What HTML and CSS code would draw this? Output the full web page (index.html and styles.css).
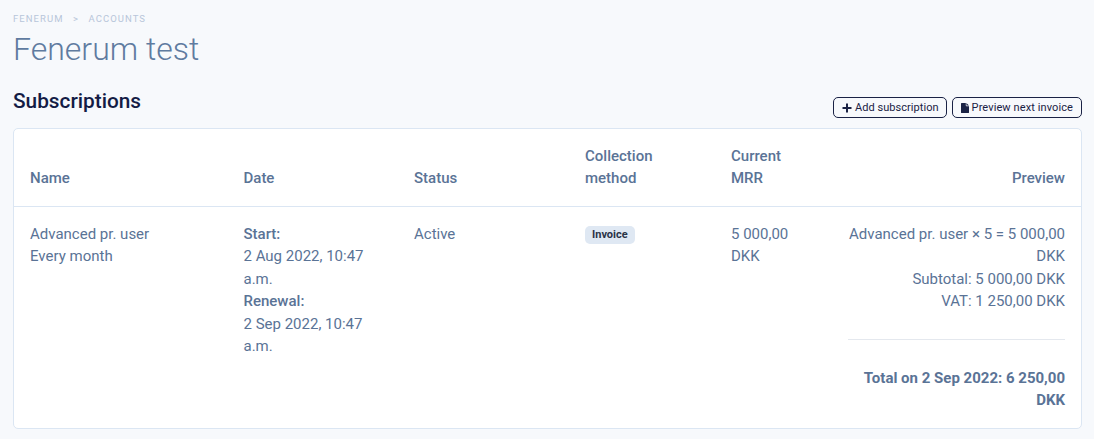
FILE: index.html
```html
<!DOCTYPE html>
<html lang="en">
<head>
<meta charset="utf-8">
<title>Fenerum test</title>
<link rel="stylesheet" href="styles.css">
</head>
<body>
<nav class="crumbs"><span>Fenerum</span><span class="sep">&gt;</span><span>Accounts</span></nav>
<h1 class="title">Fenerum test</h1>
<div class="section-head">
  <h2 class="section-title">Subscriptions</h2>
  <div class="actions">
    <button class="btn btn-add"><svg class="ic-plus" viewBox="0 0 10 10" width="10" height="10"><path d="M5 .5v9M.5 5h9" stroke="#1a2245" stroke-width="2" fill="none"/></svg>Add subscription</button>
    <button class="btn"><svg class="ic-file" viewBox="0 0 8 10" width="8" height="10"><path d="M0 .6C0 .3.3 0 .6 0H4.8v2.6c0 .3.3.6.6.6H8v6.2c0 .3-.3.6-.6.6H.6C.3 10 0 9.7 0 9.4zM5.4 0 8 2.6H5.4z" fill="#1a2245"/></svg>Preview next invoice</button>
  </div>
</div>
<section class="card">
  <div class="row head">
    <div class="c1">Name</div>
    <div class="c2">Date</div>
    <div class="c3">Status</div>
    <div class="c4">Collection method</div>
    <div class="c5">Current MRR</div>
    <div class="c6">Preview</div>
  </div>
  <div class="row body">
    <div class="c1">Advanced pr. user<br>Every month</div>
    <div class="c2"><b>Start:</b><br>2 Aug 2022, 10:47 a.m.<br><b>Renewal:</b><br>2 Sep 2022, 10:47 a.m.</div>
    <div class="c3">Active</div>
    <div class="c4"><span class="badge">Invoice</span></div>
    <div class="c5">5 000,00 DKK</div>
    <div class="c6">
      <div>Advanced pr. user × 5 = 5 000,00 DKK</div>
      <div>Subtotal: 5 000,00 DKK</div>
      <div>VAT: 1 250,00 DKK</div>
      <hr class="rule">
      <div class="total">Total on 2 Sep 2022: 6 250,00 DKK</div>
    </div>
  </div>
</section>
</body>
</html>
```
FILE: styles.css
```css
* { box-sizing: border-box; }
html, body { margin: 0; height: 100%; }
body {
  background: #f7f9fc;
  font-family: Roboto, "Liberation Sans", sans-serif;
  color: #5a7396;
  padding: 12px 12px 0 13px;
  overflow: hidden;
}
.crumbs {
  display: flex;
  gap: 9.5px;
  height: 13px;
  font-size: 9.5px;
  line-height: 13px;
  letter-spacing: 1.05px;
  text-transform: uppercase;
  color: #b7c6da;
}
.title {
  margin: 2px 0 0;
  font-size: 32px;
  line-height: 44px;
  font-weight: 300;
  color: #5f7ba0;
}
.section-head {
  display: flex;
  justify-content: space-between;
  align-items: flex-end;
  margin-top: 16px;
}
.section-title {
  margin: 0;
  font-size: 20.8px;
  line-height: 28px;
  font-weight: 500;
  color: #141c45;
}
.actions { display: flex; gap: 5px; margin-bottom: -3px; }
.btn {
  display: flex;
  align-items: center;
  gap: 3px;
  height: 21px;
  padding: 0 8px;
  background: #f7f9fc;
  border: 1px solid #1a2245;
  border-radius: 5px;
  font: 400 11px/19px Roboto, sans-serif;
  letter-spacing: .1px;
  color: #1a2245;
}
.btn-add { padding: 0 7px 0 8px; letter-spacing: .05px; }
.card {
  margin-top: 13px;
  height: 301px;
  background: #fff;
  border: 1px solid #dbe6f3;
  border-radius: 5px;
}
.row { display: grid; grid-template-columns: 213.5px 170.5px 171px 146px 117px 1fr; padding: 0 16px; }
.head {
  height: 78px;
  align-items: end;
  padding-bottom: 17px;
  border-bottom: 1px solid #dbe6f3;
  font-size: 15px;
  line-height: 22px;
  font-weight: 500;
}
.head .c4 { width: 90px; }
.head .c5 { width: 70px; }
.body { padding-top: 15.5px; font-size: 15px; line-height: 22.5px; }
.body .c2 { width: 130px; }
.body .c5 { width: 70px; }
.body b { font-weight: 500; }
.c6 { text-align: right; }
.rule { border: 0; border-top: 1px solid #e4e8ee; margin: 26px 0 27px; }
.total { font-weight: 700; }
.badge {
  display: inline-block;
  padding: 0 7px;
  height: 18px;
  line-height: 18px;
  font-size: 11px;
  font-weight: 700;
  color: #2a3347;
  background: #dfe8f3;
  border-radius: 5px;
  vertical-align: 1px;
}
```
